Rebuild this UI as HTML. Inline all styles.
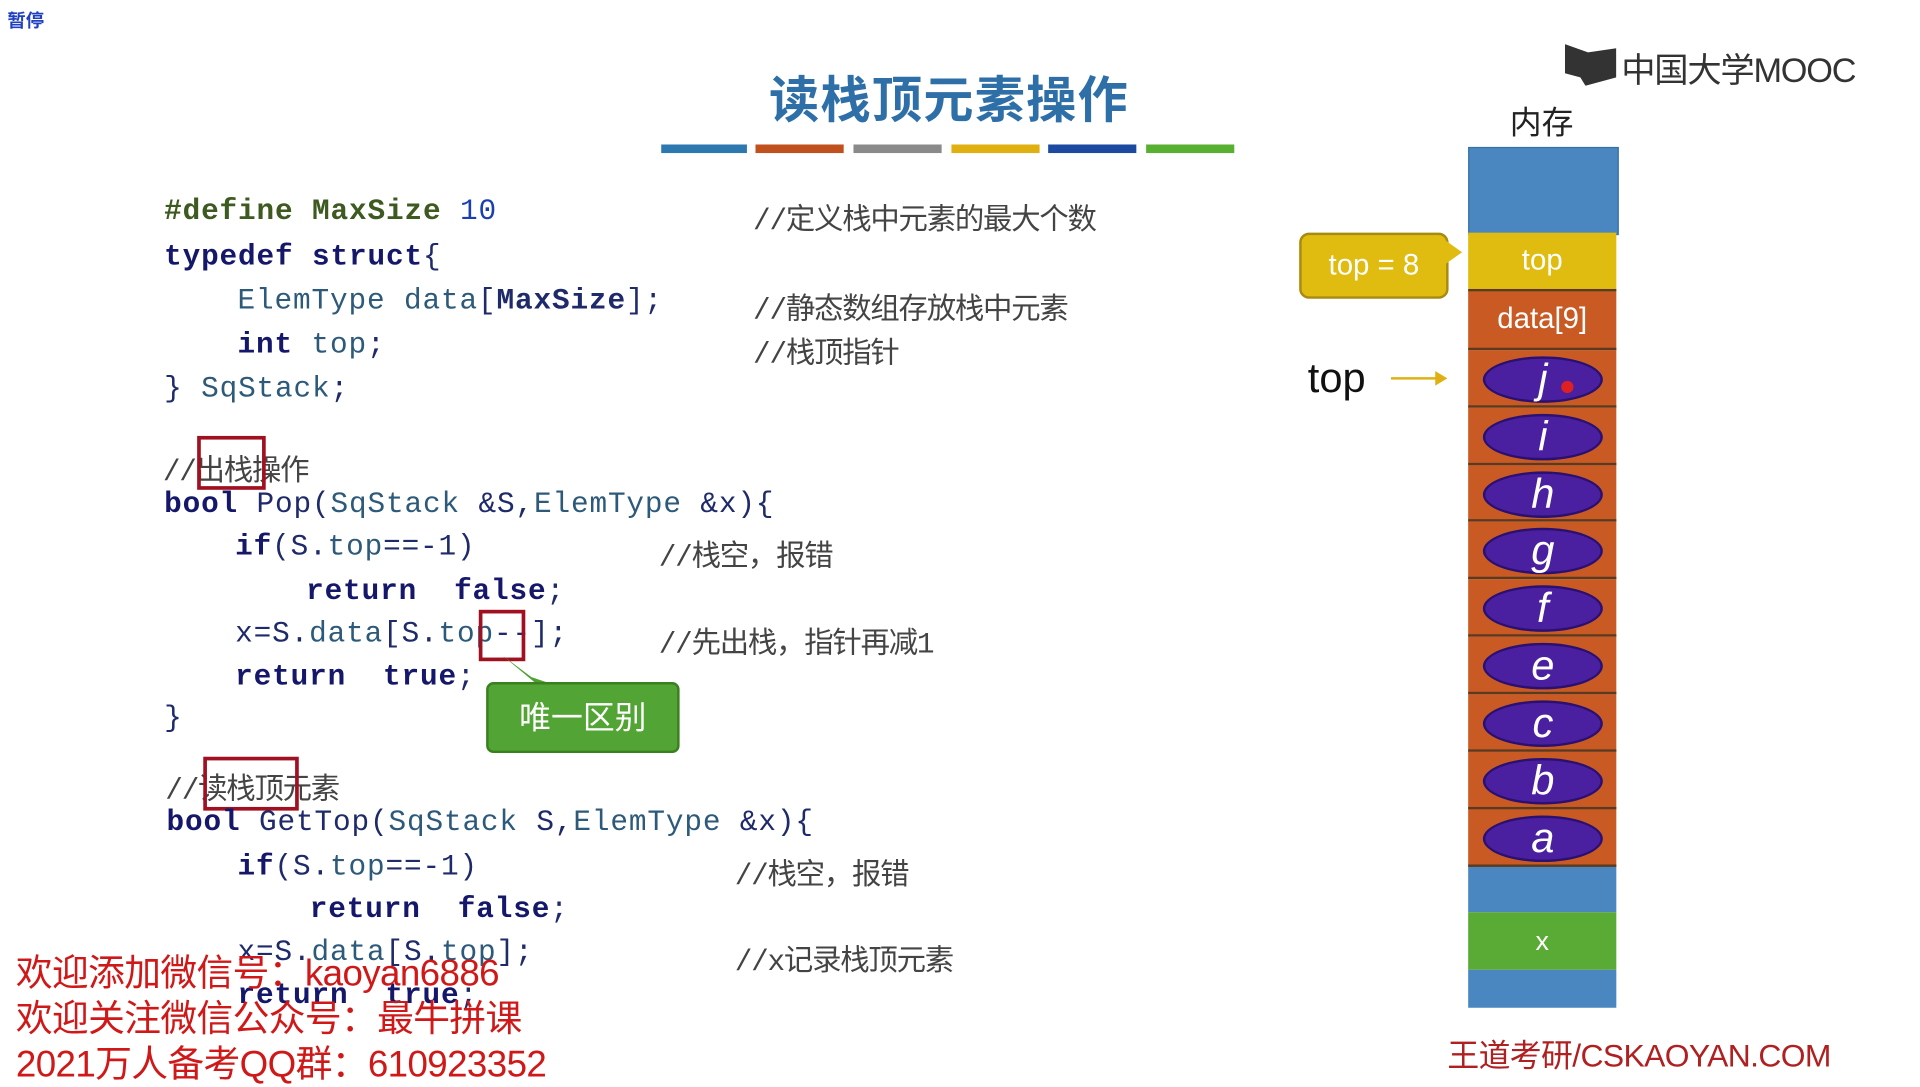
<!DOCTYPE html>
<html><head><meta charset="utf-8"><style>
html,body{margin:0;padding:0;background:#fff;overflow:hidden}
#w{position:absolute;left:0;top:0;width:1568px;height:882px;transform:scale(1.22449);transform-origin:0 0;background:#fff;font-family:"Liberation Sans","Noto Sans CJK SC",sans-serif}
.a{position:absolute;white-space:pre}
.c{font-family:"Liberation Mono","Noto Sans CJK SC",monospace;font-size:24px;color:#1e2a6a;letter-spacing:0.7px}
.k{font-weight:bold;color:#15186a}
.t{color:#2d5a7a}
.g{color:#3d5a20;font-weight:bold}
.cm{font-family:"Liberation Mono","Noto Sans CJK SC",monospace;font-size:24px;color:#444;letter-spacing:-1px}
.cell{position:absolute;left:1199px;width:121px;border-bottom:2px solid #5a3a20}
.ov{position:absolute;left:12px;top:5px;width:94px;height:34px;border-radius:50%;background:#4a20a0;border:2px solid #2a1070;color:#fff;font-style:italic;font-size:34px;text-align:center;line-height:34px;font-family:"Liberation Sans",sans-serif}
.red{position:absolute;font-size:30px;color:#d01818;font-family:"Liberation Sans","Noto Sans CJK SC",sans-serif;letter-spacing:-0.5px}
</style></head><body><div id="w">
<div class="a" style="left:6px;top:6px;font-size:15px;color:#2040c0;font-weight:bold">暂停</div>
<div class="a" style="left:628px;top:48px;font-size:41px;color:#2e6fa8;font-weight:bold;letter-spacing:1px">读栈顶元素操作</div>
<div class="a" style="left:540px;top:118px;width:70px;height:7px;background:#2e78b0"></div>
<div class="a" style="left:617px;top:118px;width:72px;height:7px;background:#c0501c"></div>
<div class="a" style="left:697px;top:118px;width:72px;height:7px;background:#8a8a8a"></div>
<div class="a" style="left:777px;top:118px;width:72px;height:7px;background:#e0b010"></div>
<div class="a" style="left:856px;top:118px;width:72px;height:7px;background:#1c4aa0"></div>
<div class="a" style="left:936px;top:118px;width:72px;height:7px;background:#58b030"></div>
<div class="a" style="left:1278px;top:36px;width:42px;height:34px;background:#333;clip-path:polygon(0 0,45% 20%,100% 10%,100% 80%,40% 100%,30% 80%,0 70%)"></div>
<div class="a" style="left:1324px;top:36px;font-size:28px;color:#333;letter-spacing:-1px">中国大学MOOC</div>
<div class="a" style="left:1233px;top:80px;font-size:26px;color:#222">内存</div>

<div class="a c" style="top:160px;left:134px"><span class="g">#define</span> <span class="g">MaxSize</span> <span style="color:#1a40b0">10</span></div>
<div class="a c" style="top:197px;left:134px"><span class="k">typedef struct</span>{</div>
<div class="a c" style="top:233px;left:194px"><span class="t">ElemType</span> <span class="t">data</span>[<b>MaxSize</b>];</div>
<div class="a c" style="top:269px;left:194px"><span class="k">int</span> <span class="t">top</span>;</div>
<div class="a c" style="top:305px;left:134px">} <span class="t">SqStack</span>;</div>
<div class="a cm" style="top:159px;left:615px">//定义栈中元素的最大个数</div>
<div class="a cm" style="top:232px;left:615px">//静态数组存放栈中元素</div>
<div class="a cm" style="top:268px;left:615px">//栈顶指针</div>

<div class="a cm" style="top:364px;left:133px">//出栈操作</div>
<div class="a" style="left:161px;top:356px;width:50px;height:38px;border:3px solid #a01020"></div>
<div class="a c" style="top:399px;left:134px"><span class="k">bool</span> Pop(<span class="t">SqStack</span> &amp;S,<span class="t">ElemType</span> &amp;x){</div>
<div class="a c" style="top:434px;left:192px"><span class="k">if</span>(S.<span class="t">top</span>==-1)</div>
<div class="a c" style="top:470px;left:250px"><span class="k">return  false</span>;</div>
<div class="a c" style="top:505px;left:192px">x=S.<span class="t">data</span>[S.<span class="t">top</span>--];</div>
<div class="a c" style="top:540px;left:192px"><span class="k">return  true</span>;</div>
<div class="a c" style="top:574px;left:134px">}</div>
<div class="a cm" style="top:434px;left:538px">//栈空，报错</div>
<div class="a cm" style="top:505px;left:538px">//先出栈，指针再减1</div>
<div class="a" style="left:391px;top:498px;width:32px;height:36px;border:3px solid #a01020"></div>
<div class="a" style="left:410px;top:535px;width:60px;height:30px;background:#4ea030;clip-path:polygon(0 0,60% 100%,100% 100%,40% 60%)"></div>
<div class="a" style="left:397px;top:557px;width:154px;height:54px;background:#52a534;border:2px solid #3a8020;border-radius:6px;color:#fff;font-size:26px;line-height:54px;text-align:center">唯一区别</div>

<div class="a cm" style="top:624px;left:135px">//读栈顶元素</div>
<div class="a" style="left:166px;top:618px;width:72px;height:38px;border:3px solid #a01020"></div>
<div class="a c" style="top:659px;left:136px"><span class="k">bool</span> GetTop(<span class="t">SqStack</span> S,<span class="t">ElemType</span> &amp;x){</div>
<div class="a c" style="top:695px;left:194px"><span class="k">if</span>(S.<span class="t">top</span>==-1)</div>
<div class="a c" style="top:730px;left:253px"><span class="k">return  false</span>;</div>
<div class="a c" style="top:765px;left:194px">x=S.<span class="t">data</span>[S.<span class="t">top</span>];</div>
<div class="a c" style="top:800px;left:194px"><span class="k">return  true</span>;</div>
<div class="a cm" style="top:694px;left:600px">//栈空，报错</div>
<div class="a cm" style="top:764px;left:600px">//x记录栈顶元素</div>

<div class="red" style="left:13px;top:770px">欢迎添加微信号：kaoyan6886</div>
<div class="red" style="left:13px;top:807px">欢迎关注微信公众号：最牛拼课</div>
<div class="red" style="left:13px;top:844px">2021万人备考QQ群：610923352</div>
<div class="a" style="left:1182px;top:842px;font-size:26px;color:#b02020;letter-spacing:-0.5px">王道考研/CSKAOYAN.COM</div>

<div class="cell" style="top:120px;height:70px;background:#4a86bf;border:1px solid #3a70a8"></div>
<div class="cell" style="top:190px;height:46px;background:#e0bb10;color:#fff;font-size:24px;text-align:center;line-height:46px">top</div>
<div class="cell" style="top:238px;height:46px;background:#c95a24;color:#fff;font-size:24px;text-align:center;line-height:46px">data[9]</div>
<div class="cell" style="top:286px;height:45px;background:#c95a24"><div class="ov">j</div></div>
<div class="cell" style="top:333px;height:45px;background:#c95a24"><div class="ov">i</div></div>
<div class="cell" style="top:380px;height:44px;background:#c95a24"><div class="ov">h</div></div>
<div class="cell" style="top:426px;height:45px;background:#c95a24"><div class="ov">g</div></div>
<div class="cell" style="top:473px;height:45px;background:#c95a24"><div class="ov">f</div></div>
<div class="cell" style="top:520px;height:45px;background:#c95a24"><div class="ov">e</div></div>
<div class="cell" style="top:567px;height:45px;background:#c95a24"><div class="ov">c</div></div>
<div class="cell" style="top:614px;height:45px;background:#c95a24"><div class="ov">b</div></div>
<div class="cell" style="top:661px;height:45px;background:#c95a24"><div class="ov">a</div></div>
<div class="cell" style="top:708px;height:37px;background:#4a86bf;border-bottom:none"></div>
<div class="cell" style="top:745px;height:47px;background:#5aaa36;color:#fff;font-size:22px;text-align:center;line-height:47px;border-bottom:none">x</div>
<div class="cell" style="top:792px;height:31px;background:#4a86bf;border-bottom:none"></div>
<div class="a" style="left:1275px;top:311px;width:10px;height:10px;border-radius:50%;background:#e02020"></div>

<div class="a" style="left:1061px;top:190px;width:118px;height:50px;background:#e0bb10;border:2px solid #a88a10;border-radius:8px;color:#fff;font-size:24px;text-align:center;line-height:50px">top = 8</div>
<div class="a" style="left:1180px;top:196px;width:14px;height:20px;background:#e0bb10;clip-path:polygon(0 0,100% 50%,0 100%)"></div>
<div class="a" style="left:1068px;top:290px;font-size:34px;color:#111">top</div>
<div class="a" style="left:1136px;top:308px;width:40px;height:2px;background:#e0b010"></div>
<div class="a" style="left:1172px;top:303px;width:10px;height:12px;background:#e0b010;clip-path:polygon(0 0,100% 50%,0 100%)"></div>
</div></body></html>
